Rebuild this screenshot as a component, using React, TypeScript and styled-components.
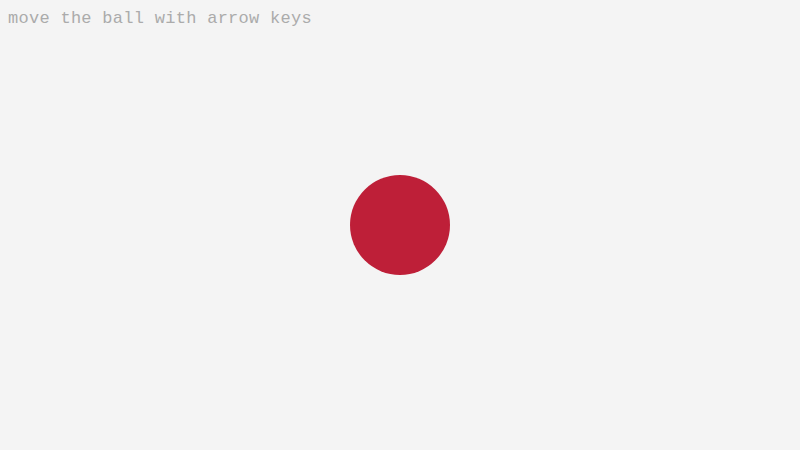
import React from 'react'
import styled, { createGlobalStyle } from 'styled-components'

const Global = createGlobalStyle`
  html, body {
    margin: 0;
    padding: 0;
    background: #f4f4f4;
  }
`

const Stage = styled.div`
  position: relative;
  width: 800px;
  height: 450px;
  overflow: hidden;
  background: #f4f4f4;
`

const Hint = styled.div`
  padding: 9px 0 0 8px;
  font-family: "Liberation Mono", "DejaVu Sans Mono", monospace;
  font-size: 17px;
  letter-spacing: 0.28px;
  line-height: 20px;
  color: #ababab;
  white-space: nowrap;
`

const Ball = styled.div<{ x: number; y: number; r: number }>`
  position: absolute;
  left: ${p => p.x - p.r}px;
  top: ${p => p.y - p.r}px;
  width: ${p => p.r * 2}px;
  height: ${p => p.r * 2}px;
  border-radius: 50%;
  background: #be1f38;
`

export default function App() {
  return (
    <Stage>
      <Global />
      <Hint>move the ball with arrow keys</Hint>
      <Ball x={400} y={225} r={50} />
    </Stage>
  )
}
